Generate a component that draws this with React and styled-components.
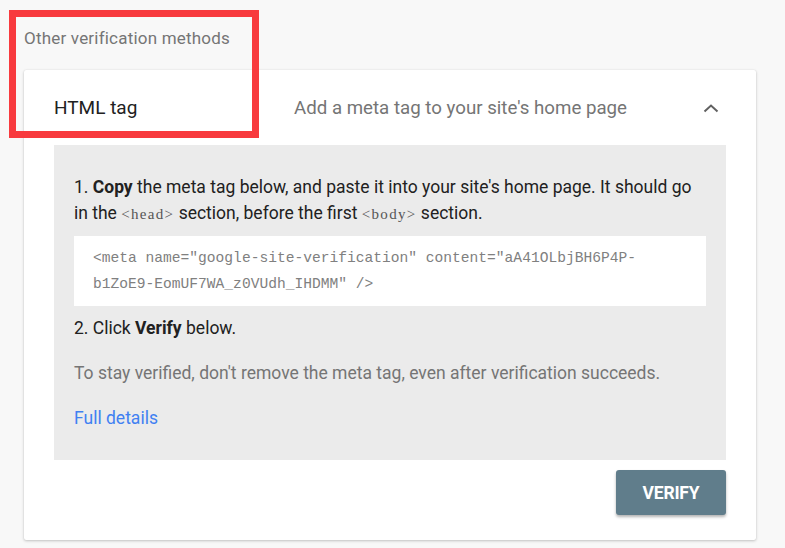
import React from "react";
import styled, { createGlobalStyle } from "styled-components";

const Global = createGlobalStyle`
  html, body { margin: 0; padding: 0; background: #f8f8f8; }
  body { font-family: Roboto, "Noto Sans", sans-serif; }
`;

const Page = styled.div`
  position: relative;
  width: 785px;
  height: 548px;
  overflow: hidden;
  padding: 27px 29px 0 24px;
  box-sizing: border-box;
`;

const SectionLabel = styled.div`
  font-size: 17px;
  letter-spacing: 0.2px;
  line-height: 22px;
  color: #757575;
  margin-bottom: 21px;
`;

const Card = styled.div`
  background: #fff;
  border-radius: 2px;
  box-shadow: 0 1px 3px rgba(0, 0, 0, 0.22), 0 0 1px rgba(0, 0, 0, 0.12);
  padding: 0 30px 25px 30px;
`;

const Header = styled.div`
  display: flex;
  align-items: center;
  height: 75px;
`;

const Title = styled.div`
  width: 240px;
  font-size: 19px;
  color: #212121;
`;

const Desc = styled.div`
  flex: 1;
  font-size: 18.7px;
  color: #757575;
`;

const Chevron = styled.div`
  width: 24px;
  height: 24px;
  margin-right: 3px;
  display: flex;
  align-items: center;
  justify-content: center;
`;

const Panel = styled.div`
  background: #ebebeb;
  padding: 29px 20px 29px 20px;
`;

const Para = styled.p`
  margin: ${(p) => p.$mt || 0}px 0 0 0;
  font-size: 17.5px;
  line-height: 26px;
  color: ${(p) => (p.$muted ? "#757575" : "#212121")};
`;

const Tag = styled.span`
  font-family: "Liberation Serif", "DejaVu Serif", serif;
  font-size: 15px;
  letter-spacing: 1.3px;
  color: #555;
`;

const CodeBox = styled.div`
  background: #fff;
  margin-top: 9px;
  padding: 9px 18px 9px 19px;
  font-family: "Liberation Mono", "DejaVu Sans Mono", monospace;
  font-size: 14.6px;
  line-height: 26px;
  color: #808080;
`;

const Link = styled.a`
  color: #4080f2;
  text-decoration: none;
`;

const Footer = styled.div`
  display: flex;
  justify-content: flex-end;
  margin-top: 10px;
`;

const VerifyButton = styled.button`
  width: 110px;
  height: 45px;
  border: none;
  border-radius: 3px;
  background: #607d8b;
  color: #fff;
  font-family: Roboto, sans-serif;
  font-weight: 700;
  font-size: 17.5px;
  letter-spacing: -0.2px;
  box-shadow: 0 2px 3px rgba(0, 0, 0, 0.3);
  cursor: pointer;
`;

const Highlight = styled.div`
  position: absolute;
  left: 9px;
  top: 10px;
  width: 250px;
  height: 128px;
  box-sizing: border-box;
  border: 7px solid #f83a3e;
  pointer-events: none;
`;

export default function App() {
  return (
    <>
      <Global />
      <Page>
        <SectionLabel>Other verification methods</SectionLabel>
        <Card>
          <Header>
            <Title>HTML tag</Title>
            <Desc>Add a meta tag to your site's home page</Desc>
            <Chevron>
              <svg width="16" height="10" viewBox="0 0 16 10">
                <polyline
                  points="1.5,8.5 8,2.5 14.5,8.5"
                  fill="none"
                  stroke="#616161"
                  strokeWidth="2"
                />
              </svg>
            </Chevron>
          </Header>
          <Panel>
            <Para>
              1. <b>Copy</b> the meta tag below, and paste it into your site's home page. It should go in the{" "}
              <Tag>&lt;head&gt;</Tag> section, before the first <Tag>&lt;body&gt;</Tag> section.
            </Para>
            <CodeBox>
              &lt;meta name="google-site-verification" content="aA41OLbjBH6P4P-b1ZoE9-EomUF7WA_z0VUdh_IHDMM" /&gt;
            </CodeBox>
            <Para $mt={9}>
              2. Click <b>Verify</b> below.
            </Para>
            <Para $mt={19} $muted>
              To stay verified, don't remove the meta tag, even after verification succeeds.
            </Para>
            <Para $mt={19}>
              <Link href="#">Full details</Link>
            </Para>
          </Panel>
          <Footer>
            <VerifyButton>VERIFY</VerifyButton>
          </Footer>
        </Card>
        <Highlight />
      </Page>
    </>
  );
}
